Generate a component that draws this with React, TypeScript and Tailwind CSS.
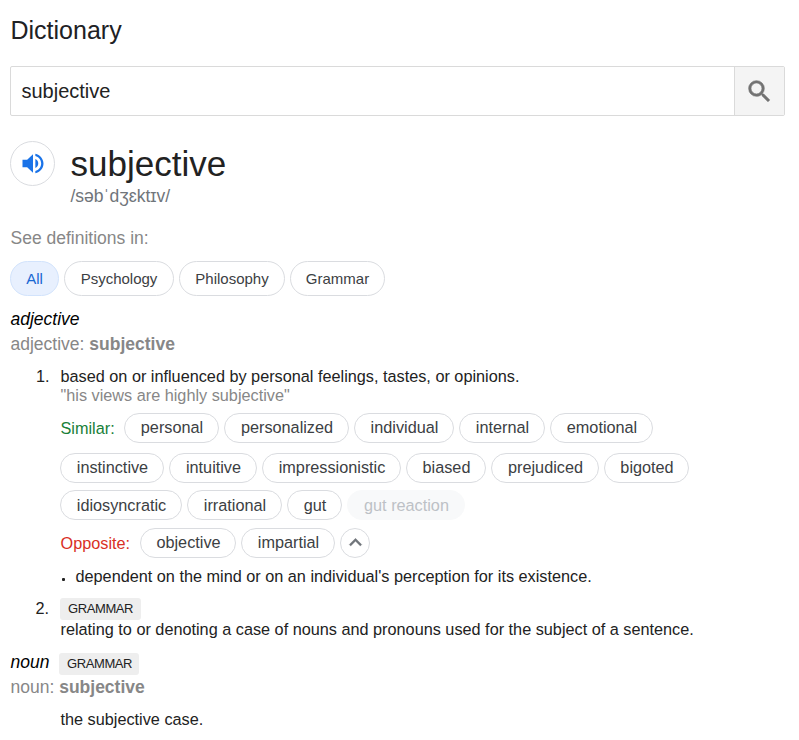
import React from "react";

type ChipProps = { label: string; width: string; muted?: boolean; low?: boolean };

function Chip({ label, width, muted, low }: ChipProps) {
  const tone = muted
    ? "border-[#f8f9fa] bg-[#f8f9fa] text-[#bdc1c6]"
    : "border-[#dadce0] bg-white text-[#3c4043]";
  return (
    <button
      className={`flex h-[30px] shrink-0 items-center justify-center whitespace-nowrap rounded-full border pl-px text-[16.25px] ${low ? "pt-px" : "pb-px"} ${width} ${tone}`}
    >
      {label}
    </button>
  );
}

function Filter({ label, width, active }: { label: string; width: string; active?: boolean }) {
  const tone = active
    ? "border-[#d2e3fc] bg-[#e8f0fe] text-[#1967d2]"
    : "border-[#dadce0] bg-white text-[#3c4043]";
  return (
    <button
      className={`flex h-[35px] items-center justify-center rounded-full border pt-[2px] text-[15px] ${width} ${tone}`}
    >
      {label}
    </button>
  );
}

function Tag({ width }: { width: string }) {
  return (
    <span
      className={`flex h-[22px] items-center whitespace-nowrap rounded-[3px] bg-[#eeeeee] pl-2 pb-px text-[13px] leading-none tracking-[-0.4px] text-[#222] ${width}`}
    >
      GRAMMAR
    </span>
  );
}

const similarFirst: ChipProps[] = [
  { label: "personal", width: "w-[95px]" },
  { label: "personalized", width: "w-[125px]" },
  { label: "individual", width: "w-[100px]" },
  { label: "internal", width: "w-[86px]" },
  { label: "emotional", width: "w-[103px]" },
];

const similarSecond: ChipProps[] = [
  { label: "instinctive", width: "w-[104px]" },
  { label: "intuitive", width: "w-[88px]" },
  { label: "impressionistic", width: "w-[139px]" },
  { label: "biased", width: "w-[80px]" },
  { label: "prejudiced", width: "w-[108px]" },
  { label: "bigoted", width: "w-[85px]" },
];

const similarThird: ChipProps[] = [
  { label: "idiosyncratic", width: "w-[122px]" },
  { label: "irrational", width: "w-[95px]" },
  { label: "gut", width: "w-[55px]" },
  { label: "gut reaction", width: "w-[118px]", muted: true },
];

export default function App() {
  return (
    <main className="h-[740px] w-[799px] overflow-hidden bg-white pl-[10px] font-['Liberation_Sans',Arial,sans-serif] text-[16.25px] text-[#222]">
      <h1 className="h-[66px] pl-[0.5px] text-[25px] leading-[61px] text-[#202124]">Dictionary</h1>

      <form className="flex h-[50px] w-[775px] overflow-hidden rounded-[2px] border border-[#dadada]">
        <div className="flex flex-1 items-center pl-[10.5px] text-[20px]">subjective</div>
        <button type="button" className="flex w-[50px] items-center justify-center border-l border-[#dadada] bg-[#f4f4f4]">
          <svg width="29" height="29" viewBox="0 0 24 24" fill="#737373" stroke="#737373" strokeWidth="0.5">
            <path d="M15.5 14h-.79l-.28-.27A6.471 6.471 0 0 0 16 9.5 6.5 6.5 0 1 0 9.5 16c1.61 0 3.09-.59 4.23-1.57l.27.28v.79l5 4.99L20.49 19l-4.99-5zm-6 0C7.01 14 5 11.99 5 9.5S7.01 5 9.5 5 14 7.01 14 9.5 11.99 14 9.5 14z" />
          </svg>
        </button>
      </form>

      <section className="flex h-[111px] pt-[25px]">
        <button className="flex h-[45px] w-[45px] items-center justify-center rounded-full border border-[#dadce0]">
          <svg width="28" height="27" viewBox="0 0 24 24" preserveAspectRatio="none" fill="#1a73e8">
            <path d="M3 8.7v6.6h4l5 4.9V3.8L7 8.7H3zm13.5 3.3A4.5 4.5 0 0 0 14 7.97v8.05c1.48-.73 2.5-2.25 2.5-4.02zM14 3.23v2.06c2.89.86 5 3.54 5 6.71s-2.11 5.85-5 6.71v2.06c4.01-.91 7-4.49 7-8.77s-2.99-7.86-7-8.77z" />
          </svg>
        </button>
        <div className="pl-[15.5px]">
          <div className="h-[45px] text-[35px] leading-[46px]">subjective</div>
          <div className="text-[17.5px] leading-[20px] text-[#70757a]">/səbˈdʒɛktɪv/</div>
        </div>
      </section>

      <p className="h-[34px] pl-[0.5px] text-[17.5px] leading-[22px] text-[#878787]">See definitions in:</p>
      <div className="flex gap-[5px]">
        <Filter label="All" width="w-[49px]" active />
        <Filter label="Psychology" width="w-[110px]" />
        <Filter label="Philosophy" width="w-[106px]" />
        <Filter label="Grammar" width="w-[95px]" />
      </div>

      <h2 className="mt-[10px] h-[25px] pl-[0.5px] text-[17.5px] italic leading-[26px] text-black">adjective</h2>
      <p className="h-[36px] pl-[0.5px] text-[17.5px] leading-[26px] text-[#878787]">
        adjective: <b>subjective</b>
      </p>

      <ol>
        <li className="flex">
          <span className="w-[50px] pl-[26px] leading-[19px]">1.</span>
          <div className="flex-1">
            <p className="h-[19px] pl-[0.5px] leading-[19px]">
              based on or influenced by personal feelings, tastes, or opinions.
            </p>
            <p className="h-[27px] pl-[0.5px] leading-[19px] text-[#878787]">"his views are highly subjective"</p>
            <div className="flex h-[40px] gap-[5px]">
              <span className="w-[59px] pl-[0.5px] leading-[31px] text-[#188038]">Similar:</span>
              {similarFirst.map((c) => <Chip key={c.label} {...c} />)}
            </div>
            <div className="flex h-[37px] gap-[5px]">
              {similarSecond.map((c) => <Chip key={c.label} {...c} />)}
            </div>
            <div className="flex h-[38px] gap-[5px]">
              {similarThird.map((c) => <Chip key={c.label} {...c} low />)}
            </div>
            <div className="flex h-[39px] gap-[5px]">
              <span className="w-[75px] pl-[0.5px] leading-[31px] text-[#d93025]">Opposite:</span>
              <Chip label="objective" width="w-[96px]" />
              <Chip label="impartial" width="w-[94px]" />
              <button className="flex h-[30px] w-[30px] items-center justify-center rounded-full border border-[#dadce0] pb-px pl-px">
                <svg className="shrink-0" width="25" height="25" viewBox="0 0 24 24" fill="#70757a" stroke="#70757a" strokeWidth="0.3">
                  <path d="M12 8l-6 6 1.41 1.41L12 10.83l4.59 4.58L18 14z" />
                </svg>
              </button>
            </div>
            <div className="flex h-[31px] leading-[19px]">
              <span className="flex w-[15.5px] pl-[2px] pt-[11px]">
                <span className="h-[3px] w-[3px] rounded-[1px] bg-[#222]" />
              </span>
              <p>dependent on the mind or on an individual's perception for its existence.</p>
            </div>
          </div>
        </li>
        <li className="flex h-[55px]">
          <span className="w-[50px] pl-[25.5px] leading-[20px]">2.</span>
          <div>
            <div className="flex h-[22px]">
              <Tag width="w-[81px]" />
            </div>
            <p className="pl-[0.5px] leading-[19px]">
              relating to or denoting a case of nouns and pronouns used for the subject of a sentence.
            </p>
          </div>
        </li>
      </ol>

      <div className="flex h-[22px]">
        <h2 className="w-[49px] pl-[0.5px] text-[17.5px] italic leading-[18px] text-black">noun</h2>
        <Tag width="w-[80px]" />
      </div>
      <p className="h-[35px] pl-[0.5px] text-[17.5px] leading-[24px] text-[#878787]">
        noun: <b>subjective</b>
      </p>
      <p className="pl-[50.5px] leading-[19px]">the subjective case.</p>
    </main>
  );
}
